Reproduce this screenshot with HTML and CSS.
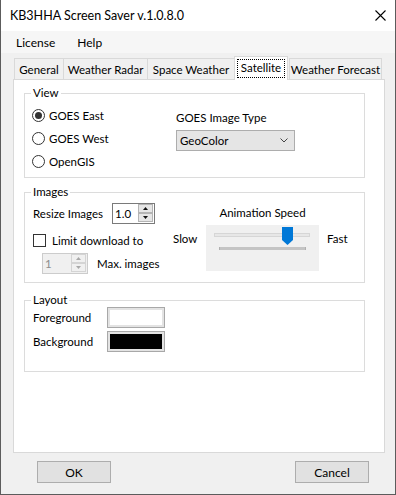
FILE: index.html
```html
<!DOCTYPE html>
<html>
<head>
<meta charset="utf-8">
<link rel="stylesheet" href="styles.css">
</head>
<body>
<div class="window">
  <div class="titlebar">
    <span class="title">KB3HHA Screen Saver v.1.0.8.0</span>
    <svg class="close" width="11" height="11" viewBox="0 0 11 11"><path d="M0.5 0.5L10.5 10.5M10.5 0.5L0.5 10.5" stroke="#000" stroke-width="1.1" fill="none"/></svg>
  </div>
  <div class="menubar"><span>License</span><span>Help</span></div>
  <div class="client">
    <div class="tabs">
      <div class="tab w-general">General</div>
      <div class="tab w-radar">Weather Radar</div>
      <div class="tab w-space">Space Weather</div>
      <div class="tab sel"><span class="focus">Satellite</span></div>
      <div class="tab w-forecast">Weather Forecast</div>
    </div>
    <div class="panel">
      <fieldset class="group g-view">
        <legend>View</legend>
        <div class="view-body">
          <div class="radios">
            <div class="radio-row"><span class="radio checked"></span><span>GOES East</span></div>
            <div class="radio-row"><span class="radio"></span><span>GOES West</span></div>
            <div class="radio-row"><span class="radio"></span><span>OpenGIS</span></div>
          </div>
          <div class="imgtype">
            <div class="lbl">GOES Image Type</div>
            <div class="combo"><span>GeoColor</span>
              <svg width="8" height="5" viewBox="0 0 8 5"><path d="M0.5 0.5L4 4L7.5 0.5" stroke="#444" fill="none"/></svg>
            </div>
          </div>
        </div>
      </fieldset>
      <fieldset class="group g-images">
        <legend>Images</legend>
        <div class="images-body">
          <div class="img-left">
            <div class="row r1">
              <span class="resize-lbl">Resize Images</span>
              <div class="num"><span>1.0</span>
                <svg class="spin" width="15" height="18" viewBox="0 0 15 18">
                  <rect x="0.5" y="0.5" width="14" height="8" fill="#e6e6e6" stroke="#b4b4b4"/>
                  <rect x="0.5" y="9.5" width="14" height="8" fill="#e6e6e6" stroke="#b4b4b4"/>
                  <path d="M5 6H10L7.5 3Z" fill="#111"/>
                  <path d="M5 12H10L7.5 15Z" fill="#111"/>
                </svg>
              </div>
            </div>
            <div class="row r2"><span class="check"></span><span>Limit download to</span></div>
            <div class="row r3">
              <div class="num dis"><span>1</span>
                <svg class="spin" width="15" height="18" viewBox="0 0 15 18">
                  <rect x="0.5" y="0.5" width="14" height="8" fill="#f0f0f0" stroke="#d4d4d4"/>
                  <rect x="0.5" y="9.5" width="14" height="8" fill="#f0f0f0" stroke="#d4d4d4"/>
                  <path d="M5 6H10L7.5 3Z" fill="#a8a8a8"/>
                  <path d="M5 12H10L7.5 15Z" fill="#a8a8a8"/>
                </svg>
              </div>
              <span class="max-lbl">Max. images</span>
            </div>
          </div>
          <div class="speed">
            <div class="speed-title">Animation Speed</div>
            <div class="slow">Slow</div>
            <div class="trackbar">
              <div class="track"></div>
              <div class="ticks"></div>
              <svg class="thumb" width="11" height="18" viewBox="0 0 11 18"><path d="M0 0H11V13L5.5 18L0 13Z" fill="#0078d7"/></svg>
            </div>
            <div class="fast">Fast</div>
          </div>
        </div>
      </fieldset>
      <fieldset class="group g-layout">
        <legend>Layout</legend>
        <div class="layout-body">
          <div class="lrow"><span class="l-lbl">Foreground</span><div class="swatch"><div class="fill white"></div></div></div>
          <div class="lrow"><span class="l-lbl">Background</span><div class="swatch"><div class="fill black"></div></div></div>
        </div>
      </fieldset>
    </div>
    <div class="buttons">
      <button class="btn">OK</button>
      <button class="btn">Cancel</button>
    </div>
  </div>
</div>
</body>
</html>
```
FILE: styles.css
```css
* { box-sizing: border-box; }
body {
  margin: 0;
  font-family: Lato, "Noto Sans", sans-serif;
  font-size: 11.5px;
  color: #000;
  background: #fff;
}
.window {
  width: 396px;
  height: 495px;
  border: 1px solid #5c5c5c;
  border-top: none;
  display: flex;
  flex-direction: column;
  background: #f0f0f0;
}
.titlebar {
  height: 31px;
  flex: none;
  background: #fff;
  display: flex;
  align-items: center;
  padding-left: 9px;
}
.title { font-size: 12.5px; }
.close { margin-left: auto; margin-right: 9px; }
.menubar {
  height: 22px;
  flex: none;
  background: #f6f6f6;
  display: flex;
  align-items: center;
  gap: 22px;
  padding-left: 15px;
  font-size: 12px;
}
.client {
  flex: 1;
  display: flex;
  flex-direction: column;
  padding: 3px 10px 0 12px;
}
.tabs {
  display: flex;
  align-items: flex-end;
  height: 23px;
  padding-left: 1px;
}
.tab {
  height: 21px;
  border: 1px solid #d9d9d9;
  border-bottom: none;
  border-right: none;
  background: #f0f0f0;
  text-align: center;
  line-height: 19px;
  padding-top: 1px;
  white-space: nowrap;
}
.w-general { width: 49px; }
.w-radar { width: 84px; }
.w-space { width: 87px; }
.w-forecast { width: 93px; border-right: 1px solid #d9d9d9; margin-left: 1px; }
.tab.sel {
  width: 54px;
  height: 24px;
  margin-bottom: -1px;
  border-right: 1px solid #d9d9d9;
  background: #fff;
  position: relative;
  z-index: 1;
  padding: 2px 2px 0;
}
.focus {
  display: block;
  height: 19px;
  border: 1px dotted #000;
  line-height: 16px;
}
.panel {
  height: 374px;
  flex: none;
  border: 1px solid #d9d9d9;
  background: #fff;
  padding: 6px 19px 0 10px;
}
.group {
  margin: 0;
  padding: 0;
  border: 1px solid #dcdcdc;
  min-width: 0;
}
.group legend {
  padding: 0 2px;
  margin-left: 6px;
  line-height: 14px;
}
.g-view { height: 92px; }
.g-images { height: 98px; margin-top: 7px; }
.g-layout { height: 79px; margin-top: 10px; }

.view-body { display: flex; padding: 4px 0 0 7px; }
.radios { width: 144px; }
.radio-row { height: 23px; display: flex; align-items: center; gap: 4px; }
.radio {
  width: 13px; height: 13px;
  border: 1px solid #333;
  border-radius: 50%;
  background: #fff;
  display: flex; align-items: center; justify-content: center;
}
.radio.checked::after {
  content: "";
  width: 7px; height: 7px;
  border-radius: 50%;
  background: #333;
}
.imgtype { padding-top: 7px; }
.lbl { line-height: 14px; }
.combo {
  margin-top: 5px;
  width: 119px;
  height: 21px;
  border: 1px solid #adadad;
  background: #e5e5e5;
  display: flex;
  align-items: center;
  justify-content: space-between;
  padding: 0 6px 1px 3px;
}

.images-body { display: flex; padding: 4px 0 0 8px; }
.img-left { width: 140px; }
.row { height: 21px; display: flex; align-items: center; }
.r2 { margin-top: 6px; }
.r3 { margin-top: 2px; padding-left: 9px; }
.resize-lbl { width: 79px; }
.num {
  width: 43px; height: 21px;
  border: 1px solid #7a7a7a;
  background: #fff;
  display: flex;
  align-items: center;
  padding: 0 1px 1px 2px;
}
.num .spin { margin-left: auto; }
.num.dis { width: 46px; border-color: #cccccc; background: #f0f0f0; color: #8d8d8d; }
.check {
  width: 13px; height: 13px;
  border: 1px solid #333;
  background: #fff;
  margin-right: 6px;
}
.max-lbl { margin-left: 9px; }

.speed {
  display: grid;
  grid-template-columns: 33px 113px auto;
  grid-template-rows: 19px 46px;
  padding-top: 3px;
}
.speed-title { grid-column: 2; grid-row: 1; text-align: center; line-height: 14px; }
.slow { grid-column: 1; grid-row: 2; margin-top: 7px; line-height: 14px; }
.fast { grid-column: 3; grid-row: 2; margin-top: 7px; margin-left: 8px; line-height: 14px; }
.trackbar {
  grid-column: 2; grid-row: 2;
  background: #f0f0f0;
  position: relative;
  padding: 8px 0 0 8px;
}
.track {
  width: 96px; height: 4px;
  border: 1px solid #d6d6d6;
  background: #e7e7e7;
}
.ticks {
  width: 87px; height: 3px;
  margin: 10px 0 0 5px;
  background: #c4c4c4;
  border-left: 1px solid #b0b0b0;
  border-right: 1px solid #b0b0b0;
}
.thumb { position: absolute; left: 76px; top: 2px; }

.layout-body { padding-left: 8px; }
.lrow { height: 21px; display: flex; align-items: center; }
.lrow + .lrow { margin-top: 3px; }
.l-lbl { width: 74px; }
.swatch {
  width: 58px; height: 21px;
  border: 1px solid #a8a8a8;
  background: #e3e3e3;
  padding: 2px;
}
.fill { height: 100%; }
.fill.white { background: #fff; }
.fill.black { background: #000; }

.buttons {
  display: flex;
  justify-content: space-between;
  margin-top: 8px;
  padding: 0 16px 0 24px;
}
.btn {
  width: 74px; height: 22px;
  border: 1px solid #adadad;
  background: #e1e1e1;
  font: inherit;
  font-size: 12px;
  color: #000;
  padding: 0;
}
```
